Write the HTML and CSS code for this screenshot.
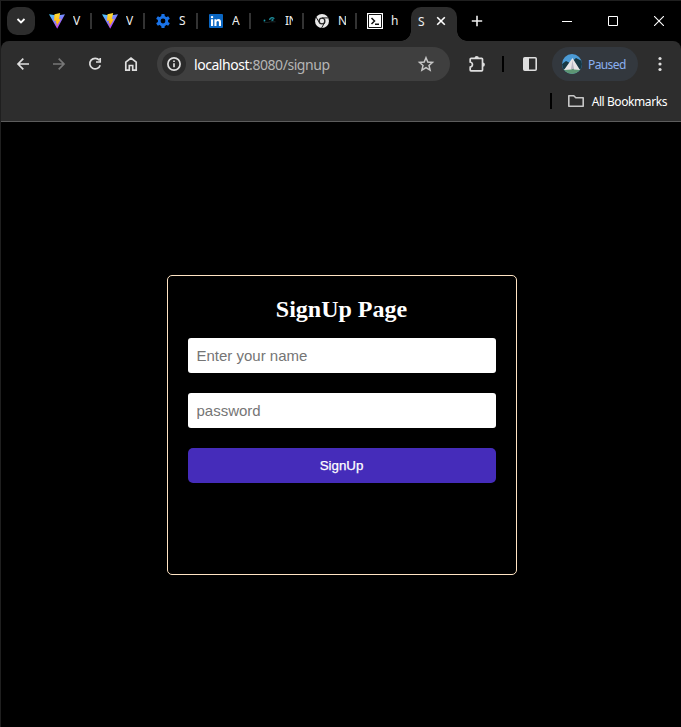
FILE: index.html
```html
<!DOCTYPE html>
<html lang="en">
<head>
<meta charset="utf-8">
<title>SignUp</title>
<link rel="stylesheet" href="styles.css">
</head>
<body>
<svg class="defs" width="0" height="0">
  <defs>
    <linearGradient id="vp" x1="0" y1="0" x2=".6" y2="1"><stop stop-color="#41d1ff"/><stop offset="1" stop-color="#bd34fe"/></linearGradient>
    <linearGradient id="vb" x1="0" y1="0" x2="0" y2="1"><stop stop-color="#ffdd35"/><stop offset="1" stop-color="#ffa800"/></linearGradient>
    <symbol id="vite" viewBox="0 0 16 16"><path fill="url(#vp)" d="M0 1.300 8 2.500l8-1.200L8.200 15.800z"/><path fill="url(#vb)" d="M11.200 0 5.500 1.200 5 8l2.300-.4-.7 2.800 1.500-.4-.9 4 4.900-8.200-2.200.4z"/></symbol>
  </defs>
</svg>
<div class="window">
  <header class="tabs">
    <div class="search"><svg width="12" height="12" viewBox="0 0 12 12"><path d="M2.500 4 6 7.500 9.500 4" fill="none" stroke="#fff" stroke-width="1.800"/></svg></div>
    <div class="tab"><svg width="16" height="16"><use href="#vite"/></svg><span>V</span></div>
    <div class="tab"><svg width="16" height="16"><use href="#vite"/></svg><span>V</span></div>
    <div class="tab"><svg width="16" height="16" viewBox="0 0 16 16"><g fill="#1a73e8"><rect x="6.300" y="1" width="3.400" height="14" rx=".7"/><rect x="6.300" y="1" width="3.400" height="14" rx=".7" transform="rotate(60 8 8)"/><rect x="6.300" y="1" width="3.400" height="14" rx=".7" transform="rotate(120 8 8)"/><circle cx="8" cy="8" r="5.200"/></g><circle cx="8" cy="8" r="2.400" fill="#000"/></svg><span>S</span></div>
    <div class="tab"><svg width="16" height="16" viewBox="0 0 16 16"><rect x="1" y="1" width="14" height="14" rx="1" fill="#0a66c2"/><path fill="#fff" d="M3 6.300h2.100V13H3zM6.400 6.300h2v.9c.4-.7 1.100-1.100 2.100-1.100 2 0 2.500 1.300 2.500 3.200V13h-2.100V9.700c0-.9-.1-1.800-1.100-1.800S8.500 8.700 8.500 9.600V13H6.400z"/><circle cx="4.050" cy="4.100" r="1.200" fill="#fff"/></svg><span>A</span></div>
    <div class="tab"><svg width="16" height="16" viewBox="0 0 16 16" fill="none"><path d="M2.500 8.800c2 1 5 .8 7 0h5" stroke="#1d2528"/><circle cx="3.500" cy="7.500" r=".9" fill="#1599a8"/><path d="M8.600 7c.2-2.600 3.800-3 4.600-1.200M10.500 7.500l2-1" stroke="#1b8795" stroke-width="1.500"/></svg><span>IN</span></div>
    <div class="tab"><svg width="16" height="16" viewBox="0 0 16 16"><circle cx="8" cy="8" r="7" fill="#e8e8e8"/><circle cx="8" cy="8" r="3.500" fill="#222"/><circle cx="8" cy="8" r="2.200" fill="#e8e8e8"/><path d="M8 4.900h6.500M10.700 9.500l-3.200 5.600M5.300 9.500 2 4" stroke="#222" stroke-width="1"/></svg><span>N</span></div>
    <div class="tab last"><svg width="16" height="16" viewBox="0 0 16 16"><path fill="#fff" d="M0 0h16v16H0z"/><path fill="none" stroke="#111" d="M1.500 1.500h13v13h-13z"/><path fill="none" stroke="#111" stroke-width="1.500" d="m4.500 5 3 3-3 3M8 11.200h4"/></svg><span>h</span></div>
    <div class="active"><span>S</span><svg width="10" height="10" viewBox="0 0 10 10"><path d="m1.200 1.200 7.600 7.600m0-7.600L1.200 8.800" stroke="#fff" stroke-width="1.600"/></svg></div>
    <svg class="plus" width="12" height="12" viewBox="0 0 12 12"><path d="M6 .8v10.400M.8 6h10.400" stroke="#eee" stroke-width="1.600"/></svg>
    <div class="controls">
      <svg width="10" height="10" viewBox="0 0 10 10"><path d="M0 5.500h10" stroke="#fff"/></svg>
      <svg width="10" height="10" viewBox="0 0 10 10"><path d="M.5.5h9v9h-9z" fill="none" stroke="#fff"/></svg>
      <svg width="10" height="10" viewBox="0 0 10 10"><path d="m0 0 10 10M10 0 0 10" stroke="#fff" stroke-width="1.100"/></svg>
    </div>
  </header>
  <div class="chrome">
    <div class="toolbar">
      <nav class="nav">
        <svg width="16" height="16" viewBox="0 0 16 16" class="line"><path d="M14 8H3m5.300-5.300L3 8l5.300 5.300"/></svg>
        <svg width="16" height="16" viewBox="0 0 16 16" class="line dim"><path d="M2 8h11M7.700 2.700 13 8l-5.300 5.300"/></svg>
        <svg width="16" height="16" viewBox="0 0 16 16" class="line"><path d="M12.300 4.300A5.300 5.300 0 1 0 13.200 9.200M13.200 2v4H9"/></svg>
        <svg width="16" height="16" viewBox="0 0 16 16" class="line"><path d="M2.800 6.100 8 2l5.200 4.100v8.100H9.700V9.500H6.300v4.700H2.800z"/></svg>
      </nav>
      <div class="omnibox">
        <div class="info"><svg width="16" height="16" viewBox="0 0 16 16" class="line"><circle cx="8" cy="8" r="6.100"/><path d="M8 7.200v4M8 4.400V6"/></svg></div>
        <div class="url"><b>localhost</b>:8080/signup</div>
        <svg width="18" height="18" viewBox="0 0 18 18"><path d="m9 2.700 1.800 4.300 4.700.4L12 10.500l1.100 4.600L9 12.700l-4.100 2.400L6 10.500 2.500 7.400 7.200 7z" fill="none" stroke="#c7c7c7" stroke-width="1.500"/></svg>
      </div>
      <svg class="ext line" width="18" height="18" viewBox="0 0 18 18"><path d="M3.200 3.300h10.500q.8 0 .8.800v11q0 .8-.8.800H3q-.8 0-.8-.8v-2.900c3-.6 3-4.600 0-5.200V4.100q0-.8 1-.8z"/><path d="M6.500 3.200a2.200 2.200 0 0 1 4.400 0zM14.700 7.400a2.200 2.200 0 0 1 0 4.400z" fill="#dedede" stroke="none"/></svg>
      <i class="bar"></i>
      <svg class="side" width="16" height="16" viewBox="0 0 16 16"><rect x="1.800" y="1.800" width="12.400" height="12.400" rx="1" fill="none" stroke="#dedede" stroke-width="1.600"/><path d="M2 2h5v12H2z" fill="#dedede"/></svg>
      <div class="profile">
        <svg width="20" height="20" viewBox="0 0 20 20"><clipPath id="c"><circle cx="10" cy="10" r="10"/></clipPath><g clip-path="url(#c)"><path fill="#4b9bd6" d="M0 0h20v20H0z"/><path fill="#173844" d="M0 10 4 7 8 9l6-5 6 3v10H0z"/><path fill="#5d9674" d="M0 15h20v5H0z"/><path fill="#e6e4e6" d="m10.500 4 7.500 12-6-.5-1.500-3-1 3-7.500.5z"/><path fill="#bbb7c3" d="m10.500 6 1.500 9H9z"/></g></svg>
        <span>Paused</span>
      </div>
      <svg class="kebab" width="4" height="16" viewBox="0 0 4 16" fill="#dedede"><circle cx="2" cy="2.500" r="1.600"/><circle cx="2" cy="8" r="1.600"/><circle cx="2" cy="13.500" r="1.600"/></svg>
    </div>
    <div class="bookmarks">
      <i class="bar"></i>
      <svg width="18" height="14" viewBox="0 0 18 14"><path d="M1.800 1.800h5l2 2h7.400v8.400H1.800z" fill="none" stroke="#c7c7c7" stroke-width="1.600" stroke-linejoin="round"/></svg>
      <span>All Bookmarks</span>
    </div>
  </div>
  <main>
    <form class="card">
      <h2>SignUp Page</h2>
      <input type="text" placeholder="Enter your name">
      <input type="password" placeholder="password">
      <button type="button">SignUp</button>
    </form>
  </main>
</div>
</body>
</html>
```
FILE: styles.css
```css
* { box-sizing: border-box; }
body { margin: 0; background: #000; font-family: "Noto Sans", sans-serif; overflow: hidden; }
svg { display: block; flex: none; }
.defs { position: absolute; }
.window { width: 681px; height: 727px; border: solid #1f1f1f; border-width: 1px 0 0 1px; display: flex; flex-direction: column; }
.tabs { height: 40px; display: flex; align-items: center; color: #eee; font-size: 12px; }
.search { width: 28px; height: 28px; margin: 0 4px 0 6px; border-radius: 10px; background: #2d2d2d; display: flex; align-items: center; justify-content: center; }
.tab { width: 53px; height: 16px; padding-left: 10px; border-right: 2px solid #333; display: flex; align-items: center; gap: 8px; }
.tab.last { border-color: transparent; }
.tab span { width: 8px; overflow: hidden; white-space: nowrap; line-height: 18px; letter-spacing: -0.6px; }
.active { position: relative; align-self: flex-end; width: 46px; height: 34px; margin-left: 1px; padding: 0 11px 6px 7px; border-radius: 10px 10px 0 0; background: #2d2d2d; display: flex; align-items: center; justify-content: space-between; }
.active::before, .active::after { content: ""; position: absolute; bottom: 0; width: 10px; height: 10px; }
.active::before { left: -10px; background: radial-gradient(circle at 0 0, transparent 9.5px, #2d2d2d 10px); }
.active::after { right: -10px; background: radial-gradient(circle at 100% 0, transparent 9.5px, #2d2d2d 10px); }
.plus { margin-left: 14px; }
.controls { margin-left: auto; padding-right: 17px; display: flex; gap: 36px; }
.chrome { height: 81px; background: #2d2d2d; border-bottom: 1px solid #5c5c5c; border-radius: 8px 8px 0 0; }
.toolbar { height: 46px; display: flex; align-items: center; }
.nav { width: 156px; padding-left: 14px; display: flex; gap: 20px; }
.line { fill: none; stroke: #dedede; stroke-width: 1.7; }
.dim { stroke: #777; }
.omnibox { width: 293px; height: 34px; padding: 0 15px 0 5px; border-radius: 17px; background: #3f3f3f; display: flex; align-items: center; }
.info { width: 24px; height: 24px; border-radius: 50%; background: #2b2b2b; display: flex; align-items: center; justify-content: center; }
.url { margin-left: 8px; flex: 1; font-size: 14px; letter-spacing: -0.45px; color: #b5b5b5; }
.url b { font-weight: 400; color: #fff; }
.ext { margin-left: 18px; }
.bar { width: 2px; height: 16px; background: #000; }
.toolbar .bar { margin-left: 16px; }
.side { margin-left: 18px; }
.profile { margin-left: 14px; width: 86px; height: 34px; padding-left: 10px; border-radius: 17px; background: #33383e; color: #8ab0f0; font-size: 12px; letter-spacing: -0.6px; display: flex; align-items: center; gap: 6px; }
.kebab { margin-left: 20px; }
.bookmarks { height: 28px; display: flex; align-items: center; justify-content: flex-end; padding-right: 14px; color: #fff; font-size: 12px; letter-spacing: -0.42px; }
.bookmarks svg { margin: 0 7px 0 15px; }
main { flex: 1; display: flex; justify-content: center; padding: 153px 0 0 1px; }
.card { width: 350px; height: 300px; padding: 20px; border: 1px solid #ffe4c4; border-radius: 5px; display: flex; flex-direction: column; gap: 20px; }
h2 { margin: 0 0 -5px; font: bold 24px/27px "Liberation Serif", serif; color: #fff; text-align: center; }
input { width: 308px; height: 35px; padding: 0 9px; border: 0; border-radius: 3px; background: #fff; font: 15px "Liberation Sans", sans-serif; }
input::placeholder { color: #757575; }
button { width: 308px; height: 35px; padding: 0; border: 0; border-radius: 5px; background: #452cba; color: #fff; font: 13.333px "Liberation Sans", sans-serif; -webkit-text-stroke: 0.25px #fff; }
```
